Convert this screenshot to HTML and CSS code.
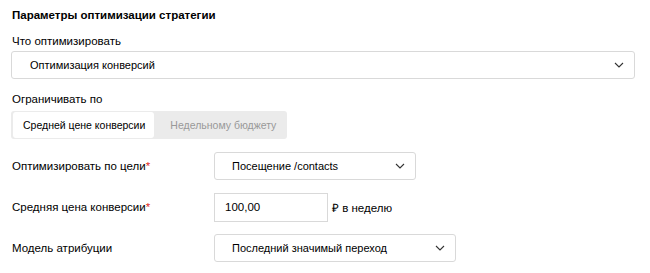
FILE: index.html
```html
<!DOCTYPE html>
<html lang="ru">
<head>
  <meta charset="UTF-8" />
  <title>Параметры оптимизации стратегии</title>
  <link rel="stylesheet" href="styles.css">
</head>
<body>
  <div class="panel">
    <div class="title">Параметры оптимизации стратегии</div>

    <div class="label">Что оптимизировать</div>
    <div class="select wide">
      <span>Оптимизация конверсий</span>
      <svg class="chevron" width="10" height="6" viewBox="0 0 10 6"><path d="M1 1l4 4 4-4" fill="none" stroke="#333" stroke-width="1.1"/></svg>
    </div>

    <div class="label limit">Ограничивать по</div>
    <div class="tabs">
      <div class="tab active">Средней цене конверсии</div>
      <div class="tab">Недельному бюджету</div>
    </div>

    <div class="rows">
      <div class="row">
        <div class="row-label">Оптимизировать по цели<span class="req">*</span></div>
        <div class="select goal">
          <span>Посещение /contacts</span>
          <svg class="chevron" width="10" height="6" viewBox="0 0 10 6"><path d="M1 1l4 4 4-4" fill="none" stroke="#333" stroke-width="1.1"/></svg>
        </div>
      </div>

      <div class="row">
        <div class="row-label">Средняя цена конверсии<span class="req">*</span></div>
        <input class="price" type="text" value="100,00" />
        <span class="unit">₽ в неделю</span>
      </div>

      <div class="row">
        <div class="row-label">Модель атрибуции</div>
        <div class="select model">
          <span>Последний значимый переход</span>
          <svg class="chevron" width="10" height="6" viewBox="0 0 10 6"><path d="M1 1l4 4 4-4" fill="none" stroke="#333" stroke-width="1.1"/></svg>
        </div>
      </div>
    </div>
  </div>
</body>
</html>
```

FILE: styles.css
```css
body {
  margin: 0;
  font-family: "Liberation Sans", Arial, sans-serif;
  font-size: 11.5px;
  color: #000;
  background-color: #fff;
}

.panel {
  padding: 7px 15px 0 11px;
}

.title {
  font-size: 11.5px;
  font-weight: bold;
  line-height: 16px;
  padding-left: 1px;
}

.label {
  line-height: 16px;
  margin-top: 10px;
  padding-left: 1px;
}

.label.limit {
  margin-top: 12px;
}

.select {
  box-sizing: border-box;
  height: 28px;
  border: 1px solid #d9d9d9;
  border-radius: 3px;
  display: flex;
  align-items: center;
  justify-content: space-between;
  padding: 0 10px 0 17px;
  background-color: #fff;
  font-size: 11px;
}

.select.wide {
  margin-top: 2px;
  padding-left: 18px;
}

.chevron {
  flex-shrink: 0;
}

.tabs {
  display: inline-flex;
  margin-top: 4px;
  height: 28px;
  box-sizing: border-box;
  padding: 1px 2px;
  background-color: #ebebeb;
  border-radius: 3px;
  font-size: 10.5px;
}

.tab {
  display: flex;
  align-items: center;
  padding: 0 9px 0 10px;
  color: #999;
  border-radius: 3px;
}

.tab.active {
  background-color: #fff;
  color: #000;
  margin-right: 6px;
}

.rows {
  display: flex;
  flex-direction: column;
  gap: 13px;
  margin-top: 13px;
}

.row {
  display: flex;
  align-items: center;
  height: 28px;
}

.row-label {
  width: 202px;
  flex-shrink: 0;
  padding-left: 1px;
}

.req {
  color: #e0281b;
}

.select.goal {
  width: 202px;
}

.select.model {
  width: 242px;
}

.price {
  box-sizing: border-box;
  width: 114px;
  height: 29px;
  border: 1px solid #d9d9d9;
  border-radius: 0;
  padding: 0 10px;
  font-family: inherit;
  font-size: 11.5px;
  color: #000;
  outline: none;
}

.unit {
  margin-left: 4px;
}
```
